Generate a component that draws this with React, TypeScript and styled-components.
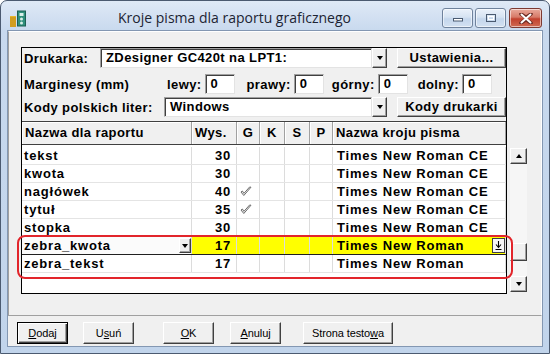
import React from "react";
import styled, { createGlobalStyle } from "styled-components";

const GlobalStyle = createGlobalStyle`
  html, body { margin: 0; padding: 0; background: #ffffff; }
  body { font-family: "Liberation Sans", Arial, sans-serif; }
`;

const Window = styled.div`
  position: relative;
  width: 550px;
  height: 354px;
  box-sizing: border-box;
  border: 1px solid #4b5a70;
  border-radius: 7px 7px 0 0;
  background: linear-gradient(#dfe9f6, #c8d9ee 30px, #c1d4eb);
  display: flex;
  flex-direction: column;
  overflow: hidden;
`;

const TitleBar = styled.div`
  height: 29px;
  display: flex;
  align-items: flex-start;
  padding: 0 7px 0 8px;
  box-sizing: border-box;
`;

const AppIcon = styled.svg`
  margin-top: 9px;
  flex: none;
`;

const Title = styled.div`
  flex: 1;
  text-align: center;
  font-family: "Open Sans", "Noto Sans", sans-serif;
  font-size: 14px;
  color: #1c2433;
  line-height: 29px;
  padding-top: 2px;
`;

const CaptionGroup = styled.div`
  display: flex;
  gap: 2px;
  margin-top: 7px;
`;

const CaptionButton = styled.div<{ $close?: boolean }>`
  width: ${(p) => (p.$close ? "33px" : "31px")};
  height: 20px;
  box-sizing: border-box;
  border: 1px solid ${(p) => (p.$close ? "#7d3a32" : "#6f829c")};
  border-radius: 3px;
  margin-left: ${(p) => (p.$close ? "1px" : "0")};
  background: ${(p) =>
    p.$close
      ? "linear-gradient(#e9aa9c, #d77a68 45%, #c2412e 55%, #cf6a52)"
      : "linear-gradient(#eaf1fa, #d6e3f2 45%, #c4d6ec 55%, #d3e1f1)"};
  box-shadow: inset 0 0 0 1px rgba(255, 255, 255, 0.55);
  display: flex;
  align-items: center;
  justify-content: center;
`;

const Client = styled.div`
  flex: 1;
  margin: 0 6px 6px 6px;
  border: 1px solid #8397b2;
  background: #f0f0f0;
  display: flex;
  flex-direction: column;
`;

const Panel = styled.div`
  height: 285px;
  box-sizing: border-box;
  border: 1px solid #a0a0a0;
  border-top-color: #ffffff;
  border-right-color: #ffffff;
  padding: 15px 0 0 12px;
  display: flex;
  align-items: flex-start;
`;

const Frame = styled.div`
  width: 486px;
  height: 247px;
  box-sizing: border-box;
  border: 1px solid #000000;
  display: flex;
  flex-direction: column;
`;

const FormRow = styled.div<{ $mt: number }>`
  height: 20px;
  margin-top: ${(p) => p.$mt}px;
  display: flex;
  align-items: center;
  padding-left: 2px;
`;

const Label = styled.span<{ $w?: number; $ml?: number }>`
  ${(p) => (p.$w ? `width: ${p.$w}px;` : "")}
  margin-left: ${(p) => p.$ml || 0}px;
  flex: none;
  font-size: 13px;
  font-weight: bold;
  letter-spacing: 0.4px;
  color: #000;
  white-space: nowrap;
`;

const Field = styled.div<{ $w: number; $ml?: number }>`
  width: ${(p) => p.$w}px;
  height: 20px;
  margin-left: ${(p) => p.$ml || 0}px;
  box-sizing: border-box;
  flex: none;
  background: #ffffff;
  border: 1px solid #a0a0a0;
  border-right-color: #e3e3e3;
  border-bottom-color: #e3e3e3;
  box-shadow: inset 1px 1px 0 #404040;
  padding-left: 5px;
  font-size: 13px;
  font-weight: bold;
  letter-spacing: 0.4px;
  line-height: 18px;
  white-space: nowrap;
  overflow: hidden;
`;

const ArrowButton = styled.div<{ $w?: number; $h?: number }>`
  width: ${(p) => p.$w || 15}px;
  height: ${(p) => p.$h || 18}px;
  box-sizing: border-box;
  flex: none;
  background: #f0f0f0;
  border: 1px solid #ffffff;
  border-right-color: #404040;
  border-bottom-color: #404040;
  box-shadow: inset -1px -1px 0 #a0a0a0;
  display: flex;
  align-items: center;
  justify-content: center;
  &::after {
    content: "";
    border-left: 3.5px solid transparent;
    border-right: 3.5px solid transparent;
    border-top: 4px solid #000;
  }
`;

const SideButton = styled.div`
  margin-left: auto;
  width: 109px;
  height: 20px;
  box-sizing: border-box;
  border: 1px solid #ffffff;
  border-right-color: #404040;
  border-bottom-color: #404040;
  box-shadow: inset -1px -1px 0 #a0a0a0;
  background: #f0f0f0;
  text-align: center;
  font-size: 13px;
  font-weight: bold;
  letter-spacing: 0.4px;
  line-height: 18px;
`;

const Header = styled.div`
  margin-top: 4px;
  height: 24px;
  box-sizing: border-box;
  border-top: 1px solid #404040;
  border-bottom: 1px solid #404040;
  display: flex;
`;

const HeadCell = styled.div<{ $w?: number; $center?: boolean }>`
  ${(p) => (p.$w ? `width: ${p.$w}px; flex: none;` : "flex: 1;")}
  box-sizing: border-box;
  border-right: 1px solid #a0a0a0;
  box-shadow: inset 1px 1px 0 #ffffff;
  padding-left: ${(p) => (p.$center ? 0 : 3)}px;
  text-align: ${(p) => (p.$center ? "center" : "left")};
  font-size: 13px;
  font-weight: bold;
  letter-spacing: 0.4px;
  line-height: 22px;
  white-space: nowrap;
`;

const Data = styled.div`
  flex: 1;
  padding-top: 2px;
  background: #ffffff;
  display: flex;
  flex-direction: column;
`;

const Row = styled.div<{ $focus?: boolean }>`
  height: 18px;
  box-sizing: border-box;
  display: flex;
  border-bottom: 1px solid ${(p) => (p.$focus ? "#202020" : "#e4e4e4")};
  ${(p) => (p.$focus ? "box-shadow: 0 -1px 0 #808080;" : "")}
`;

const Cell = styled.div<{ $w?: number; $align?: string; $bg?: string; $pad?: string }>`
  ${(p) => (p.$w ? `width: ${p.$w}px; flex: none;` : "flex: 1;")}
  box-sizing: border-box;
  border-right: 1px solid #dcdcdc;
  background: ${(p) => p.$bg || "transparent"};
  padding: ${(p) => p.$pad || "0 0 0 2px"};
  text-align: ${(p) => p.$align || "left"};
  display: flex;
  align-items: center;
  justify-content: ${(p) => (p.$align === "right" ? "flex-end" : "flex-start")};
  font-size: 13px;
  font-weight: bold;
  letter-spacing: 0.8px;
  color: #000;
  white-space: nowrap;
  overflow: hidden;
`;

const CellText = styled.span`
  flex: 1;
`;

const PickButton = styled.div`
  width: 13px;
  height: 15px;
  box-sizing: border-box;
  flex: none;
  background: #f6f6f6;
  border: 1px solid #404040;
  display: flex;
  align-items: center;
  justify-content: center;
`;

const ScrollBar = styled.div`
  width: 17px;
  height: 144px;
  margin: 101px 0 0 3px;
  display: flex;
  flex-direction: column;
  background: #f6f6f6;
`;

const ScrollArrow = styled.div<{ $up?: boolean }>`
  height: 16px;
  box-sizing: border-box;
  background: #f0f0f0;
  border: 1px solid #ffffff;
  border-right-color: #404040;
  border-bottom-color: #404040;
  box-shadow: inset -1px -1px 0 #a0a0a0;
  display: flex;
  align-items: center;
  justify-content: center;
  &::after {
    content: "";
    border-left: 3.5px solid transparent;
    border-right: 3.5px solid transparent;
    ${(p) => (p.$up ? "border-bottom: 4px solid #000;" : "border-top: 4px solid #000;")}
  }
`;

const ScrollThumb = styled.div`
  height: 18px;
  margin-top: 79px;
  margin-bottom: auto;
  box-sizing: border-box;
  background: #f0f0f0;
  border: 1px solid #ffffff;
  border-right-color: #404040;
  border-bottom-color: #404040;
  box-shadow: inset -1px -1px 0 #a0a0a0;
`;

const ButtonBar = styled.div`
  display: flex;
  padding: 6px 0 0 9px;
`;

const PushButton = styled.div<{ $w: number; $ml: number; $default?: boolean }>`
  width: ${(p) => p.$w}px;
  height: 22px;
  margin-left: ${(p) => p.$ml}px;
  box-sizing: border-box;
  background: #f0f0f0;
  border: 1px solid ${(p) => (p.$default ? "#000" : "#ffffff")};
  ${(p) => (p.$default ? "" : "border-right-color: #404040; border-bottom-color: #404040;")}
  box-shadow: ${(p) =>
    p.$default
      ? "inset 1px 1px 0 #ffffff, inset -1px -1px 0 #404040, inset -2px -2px 0 #a0a0a0"
      : "inset -1px -1px 0 #a0a0a0"};
  text-align: center;
  font-size: 11px;
  letter-spacing: -0.1px;
  line-height: 20px;
  color: #000;
  u { text-decoration: underline; }
`;

const Annotation = styled.div`
  position: absolute;
  left: 16px;
  top: 234px;
  width: 496px;
  height: 44px;
  box-sizing: border-box;
  border: 2px solid #e2252b;
  border-radius: 8px;
  pointer-events: none;
`;

const cols = [170, 45, 23, 25, 25, 23];

type Item = { name: string; size: number; bold?: boolean; font: string };

const items: Item[] = [
  { name: "tekst", size: 30, font: "Times New Roman CE" },
  { name: "kwota", size: 30, font: "Times New Roman CE" },
  { name: "nagłówek", size: 40, bold: true, font: "Times New Roman CE" },
  { name: "tytuł", size: 35, bold: true, font: "Times New Roman CE" },
  { name: "stopka", size: 30, font: "Times New Roman CE" },
  { name: "zebra_kwota", size: 17, font: "Times New Roman" },
  { name: "zebra_tekst", size: 17, font: "Times New Roman" },
];

function Check() {
  return (
    <svg width="12" height="11" viewBox="0 0 12 11">
      <path d="M1 6 L3.8 9.5 L11 1.2 L9.6 1 L3.9 7.4 L2.4 5 Z" fill="#ffffff" stroke="#6b6b6b" strokeWidth="1" strokeLinejoin="round" />
    </svg>
  );
}

function DownToBar() {
  return (
    <svg width="9" height="11" viewBox="0 0 9 11">
      <path d="M4.5 1 V7 M2 4.5 L4.5 7.5 L7 4.5 M1.5 9.5 H7.5" fill="none" stroke="#000" strokeWidth="1.1" />
    </svg>
  );
}

export default function App() {
  const focusIndex = 5;
  return (
    <>
      <GlobalStyle />
      <Window>
        <TitleBar>
          <AppIcon width="18" height="18" viewBox="0 0 18 18">
            <rect x="1" y="6" width="6" height="11" fill="#e8b62a" />
            <path d="M1 8 H7 M1 10 H7 M1 12 H7 M1 14 H7 M1 16 H7" stroke="#b07812" strokeWidth="0.8" />
            <rect x="8.5" y="1" width="8" height="15" fill="#2f8f7c" stroke="#1b5f52" />
            <rect x="10.5" y="3" width="4" height="3" fill="#d8efe8" />
            <circle cx="12.5" cy="9" r="1.5" fill="#d8efe8" />
            <circle cx="12.5" cy="13" r="1.5" fill="#d8efe8" />
          </AppIcon>
          <Title>Kroje pisma dla raportu graficznego</Title>
          <CaptionGroup>
            <CaptionButton>
              <svg width="12" height="8" viewBox="0 0 12 8">
                <rect x="1.5" y="4.5" width="9" height="2.5" fill="#ffffff" stroke="#4a5a70" />
              </svg>
            </CaptionButton>
            <CaptionButton>
              <svg width="12" height="10" viewBox="0 0 12 10">
                <rect x="1.5" y="1.5" width="9" height="7" fill="none" stroke="#4a5a70" strokeWidth="1" />
                <rect x="3.5" y="3.5" width="5" height="3" fill="none" stroke="#ffffff" strokeWidth="1" />
              </svg>
            </CaptionButton>
            <CaptionButton $close>
              <svg width="14" height="11" viewBox="0 0 14 11">
                <path d="M2 1 L7 4.5 L12 1 M2 10 L7 6.5 L12 10 M7 4.5 V6.5" fill="none" stroke="#6a2a22" strokeWidth="3.6" strokeLinecap="round" />
                <path d="M2.5 1.5 L11.5 9.5 M11.5 1.5 L2.5 9.5" fill="none" stroke="#ffffff" strokeWidth="2" strokeLinecap="round" />
              </svg>
            </CaptionButton>
          </CaptionGroup>
        </TitleBar>
        <Client>
          <Panel>
            <Frame>
              <FormRow $mt={0}>
                <Label $w={76}>Drukarka:</Label>
                <Field $w={272}>ZDesigner GC420t na LPT1:</Field>
                <ArrowButton $h={20} />
                <SideButton>Ustawienia...</SideButton>
              </FormRow>
              <FormRow $mt={6}>
                <Label $w={143}>Marginesy (mm)</Label>
                <Label>lewy:</Label>
                <Field $w={30} $ml={3}>0</Field>
                <Label $ml={12}>prawy:</Label>
                <Field $w={30} $ml={3}>0</Field>
                <Label $ml={8}>górny:</Label>
                <Field $w={30} $ml={3}>0</Field>
                <Label $ml={10}>dolny:</Label>
                <Field $w={30} $ml={3}>0</Field>
              </FormRow>
              <FormRow $mt={3}>
                <Label $w={140}>Kody polskich liter:</Label>
                <Field $w={208}>Windows</Field>
                <ArrowButton $h={20} />
                <SideButton>Kody drukarki</SideButton>
              </FormRow>
              <Header>
                <HeadCell $w={cols[0]}>Nazwa dla raportu</HeadCell>
                <HeadCell $w={cols[1]}>Wys.</HeadCell>
                <HeadCell $w={cols[2]} $center>G</HeadCell>
                <HeadCell $w={cols[3]} $center>K</HeadCell>
                <HeadCell $w={cols[4]} $center>S</HeadCell>
                <HeadCell $w={cols[5]} $center>P</HeadCell>
                <HeadCell>Nazwa kroju pisma</HeadCell>
              </Header>
              <Data>
                {items.map((it, i) => {
                  const focus = i === focusIndex;
                  const yellow = focus ? "#ffff00" : undefined;
                  return (
                    <Row key={it.name} $focus={focus}>
                      <Cell $w={cols[0]} $bg={focus ? "#fbfbfb" : undefined}>
                        <CellText>{it.name}</CellText>
                        {focus && <ArrowButton $w={12} $h={15} />}
                      </Cell>
                      <Cell $w={cols[1]} $align="right" $pad="0 5px 0 0" $bg={yellow}>
                        {it.size}
                      </Cell>
                      <Cell $w={cols[2]} $bg={yellow} $pad="0 0 0 3px">
                        {it.bold && <Check />}
                      </Cell>
                      <Cell $w={cols[3]} $bg={yellow} />
                      <Cell $w={cols[4]} $bg={yellow} />
                      <Cell $w={cols[5]} $bg={yellow} />
                      <Cell $bg={yellow} $pad="0 0 0 4px">
                        <CellText>{it.font}</CellText>
                        {focus && (
                          <PickButton>
                            <DownToBar />
                          </PickButton>
                        )}
                      </Cell>
                    </Row>
                  );
                })}
              </Data>
            </Frame>
            <ScrollBar>
              <ScrollArrow $up />
              <ScrollThumb />
              <ScrollArrow />
            </ScrollBar>
          </Panel>
          <ButtonBar>
            <PushButton $w={51} $ml={0} $default>
              <u>D</u>odaj
            </PushButton>
            <PushButton $w={51} $ml={15}>
              U<u>s</u>uń
            </PushButton>
            <PushButton $w={51} $ml={29}>
              <u>O</u>K
            </PushButton>
            <PushButton $w={51} $ml={16}>
              <u>A</u>nuluj
            </PushButton>
            <PushButton $w={90} $ml={22}>
              Strona testo<u>w</u>a
            </PushButton>
          </ButtonBar>
        </Client>
        <Annotation />
      </Window>
    </>
  );
}
